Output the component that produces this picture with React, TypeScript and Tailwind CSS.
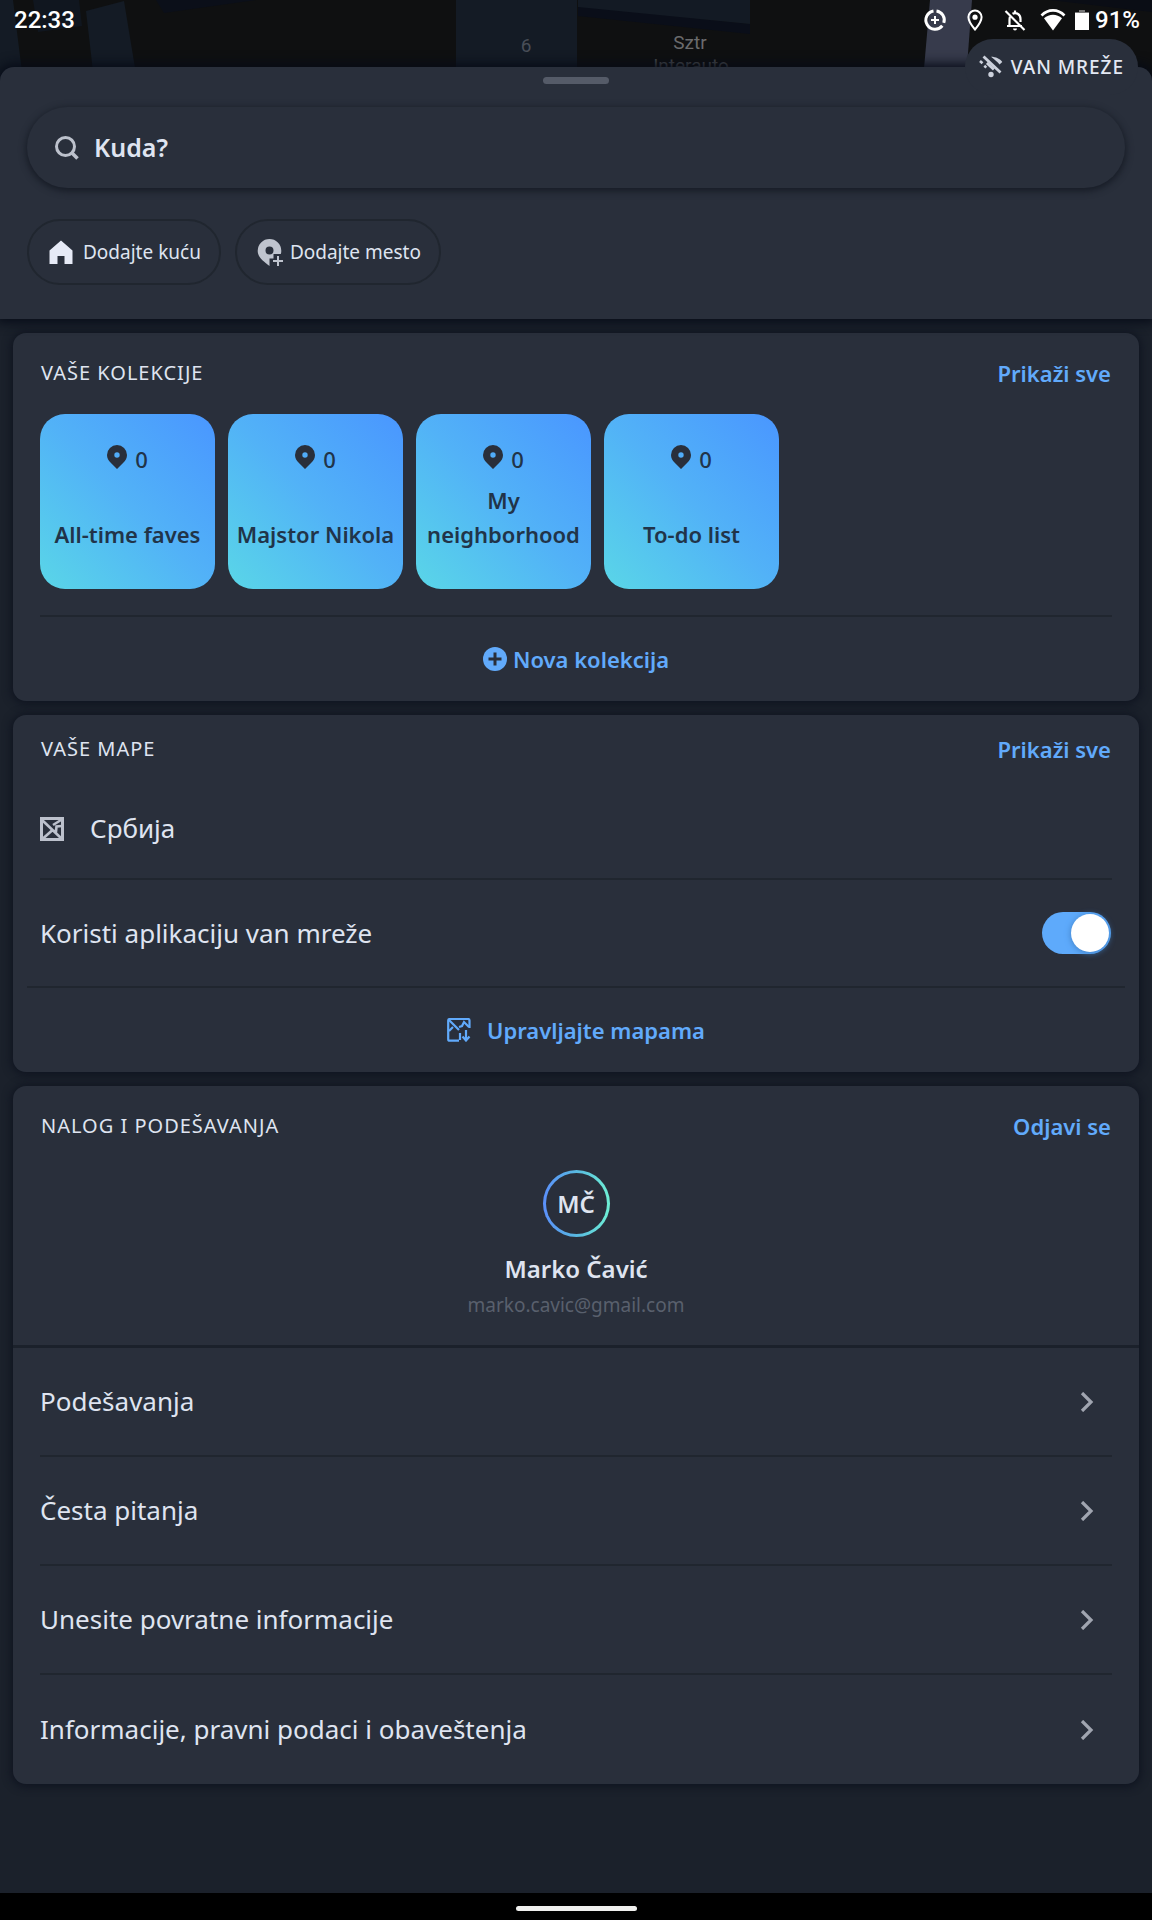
import { useState } from "react";
import type { ReactNode } from "react";
import { clsx } from "clsx";

const COLLECTIONS = [
  { name: "All-time faves", count: 0 },
  { name: "Majstor Nikola", count: 0 },
  { name: "My neighborhood", count: 0 },
  { name: "To-do list", count: 0 },
];

const LINKS = [
  "Podešavanja",
  "Česta pitanja",
  "Unesite povratne informacije",
  "Informacije, pravni podaci i obaveštenja",
];

function MapBackdrop() {
  return (
    <svg
      className="absolute inset-0 h-full w-full"
      viewBox="0 0 1152 80"
      preserveAspectRatio="xMidYMin slice"
      aria-hidden="true"
    >
      <rect width="1152" height="80" fill="#0f1011" />
      <path d="M0 0h13l10 80H0z" fill="#141b25" />
      <path d="M33 0h46l3 26-44 6z" fill="#10161f" />
      <path d="M86 11l38-10 13 79H94z" fill="#141b25" />
      <path d="M156 0h100l-92 13z" fill="#0b0f19" />
      <rect x="456" width="121" height="80" fill="#141b25" />
      <path d="M578 6l172 18v10L578 16z" fill="#0a0e19" />
      <path d="M578 0h172v24L578 7z" fill="#131a24" />
      <path d="M930 0h42l-6 80h-43z" fill="#373b4c" />
      <path d="M1050 0h102v12z" fill="#0a0d15" />
      <g fontFamily="Roboto, sans-serif" textAnchor="middle">
        <text x="526" y="52" fontSize="19" fill="#494e58">
          6
        </text>
        <text x="690" y="49" fontSize="19" fill="#6a6b6d">
          Sztr
        </text>
        <text x="691" y="72" fontSize="19" fill="#4a4c50">
          Interauto
        </text>
      </g>
    </svg>
  );
}

function StatusBar() {
  return (
    <div className="relative flex items-center justify-between pt-1 pr-3 pl-3.5 font-[Roboto,sans-serif] text-2xl leading-8 font-medium text-white">
      <span>22:33</span>
      <div className="flex items-center">
        <svg className="mr-4 size-6" viewBox="0 0 24 24" fill="none" aria-hidden="true">
          <path d="M13.5 2.9a9.2 9.2 0 0 1 7.3 12M19.3 17.7A9.2 9.2 0 1 1 10.5 2.9" stroke="#fff" strokeWidth="3" />
          <path d="M12 8v8M8 12h8" stroke="#fff" strokeWidth="2" />
        </svg>
        <svg className="mr-4 size-6" viewBox="0 0 24 24" aria-hidden="true">
          <path
            d="M12 2.500a6.600 6.600 0 0 0-6.600 6.600c0 4.900 6.600 12.400 6.600 12.400s6.600-7.500 6.600-12.400A6.600 6.600 0 0 0 12 2.500z"
            fill="none"
            stroke="#fff"
            strokeWidth="2"
          />
          <circle cx="12" cy="9.2" r="2.600" fill="#fff" />
        </svg>
        <svg className="mr-3 size-6" viewBox="0 0 24 24" fill="none" stroke="#fff" strokeWidth="2.200" aria-hidden="true">
          <path d="M7 8.600C6.500 10 6.500 11 6.500 12v6h11M9.500 5.800C12.500 4 17.500 5.500 17.500 11v3M4 18h15M12 2.500V5" />
          <path d="M2.500 3l19 19" />
          <path d="M10 20.500h4a2 2 0 0 1-4 0z" fill="#fff" stroke="none" />
        </svg>
        <svg className="mr-2 size-7" viewBox="0 0 28 28" fill="none" aria-hidden="true">
          <path d="M2.500 9.500C9 2.700 19 2.700 25.500 9.500" stroke="#fff" strokeWidth="2.600" />
          <path d="M5 12.300c5-4.800 13-4.800 18 0L14 24.500z" fill="#fff" />
        </svg>
        <svg className="mr-1.5 h-6 w-3.5" viewBox="0 0 14 24" aria-hidden="true">
          <path d="M4 2h6v2h4v3H0V4h4z" fill="#777" />
          <path d="M0 5h14v17H0z" fill="#fff" />
        </svg>
        <span>91%</span>
      </div>
    </div>
  );
}

function OfflineBadge() {
  return (
    <div className="absolute top-[39px] right-3.5 z-10 flex h-14 items-center gap-2 rounded-full bg-[#292f3b] px-3.5 text-[19px] font-medium tracking-wider text-[#e3e8f3]">
      <svg className="size-6" viewBox="0 0 24 24" fill="none" stroke="#ccd1dc" aria-hidden="true">
        <path d="M4.500 1.500l17 16" strokeWidth="2.800" />
        <path d="M12 1.800c5 0 9 2.200 11.300 5.200l-2.800 2.600C18.500 7 15.500 4.500 12 1.800z" fill="#ccd1dc" stroke="none" />
        <path d="M7.800 8l7 6.500" strokeWidth="2.600" />
        <path d="M1 6l2.500 2.300M5.300 10.800l2 1.800" strokeWidth="2.600" />
        <circle cx="12" cy="19.500" r="2.700" fill="#ccd1dc" stroke="none" />
      </svg>
      VAN MREŽE
    </div>
  );
}

function PinIcon({ className }: { className?: string }) {
  return (
    <svg className={className} viewBox="0 0 20 24" aria-hidden="true">
      <path
        fillRule="evenodd"
        fill="currentColor"
        d="M10 0a10 10 0 0 0-10 10c0 3 1.500 5.500 3.500 7.500L10 24l6.500-6.500C18.500 15.500 20 13 20 10A10 10 0 0 0 10 0zm0 7.300a2.700 2.700 0 1 1 0 5.400 2.700 2.700 0 0 1 0-5.400z"
      />
    </svg>
  );
}

type CardProps = {
  title: string;
  action: string;
  dense?: boolean;
  children: ReactNode;
};

function Card({ title, action, dense, children }: CardProps) {
  return (
    <section className="rounded-[13px] bg-[#292f3b] shadow-[0_1px_8px_2px_#0f1420]">
      <div className={clsx("flex items-center justify-between px-7", dense ? "pt-3.5" : "pt-5")}>
        <h2 className="text-xl leading-10 tracking-wider">{title}</h2>
        <button type="button" className="text-[22px] leading-10 font-semibold text-[#61aafb]">
          {action}
        </button>
      </div>
      {children}
    </section>
  );
}

export default function App() {
  const [offline, setOffline] = useState(true);

  return (
    <div className="relative flex min-h-screen flex-col bg-[#1b212b] font-['Noto_Sans',sans-serif] text-[#dfe4f0]">
      <div className="relative h-[67px]">
        <div className="absolute inset-x-0 top-0 h-20 overflow-hidden">
          <MapBackdrop />
        </div>
        <StatusBar />
      </div>
      <OfflineBadge />

      <header className="relative rounded-t-[14px] bg-[#292f3b] px-[27px] pt-2.5 pb-[34px] shadow-[0_0_12px_3px_#060b17]">
        <div className="mx-auto h-[7px] w-[66px] rounded-full bg-[#555b68]" />
        <label className="mt-[23px] flex h-[81px] items-center gap-[15px] rounded-full px-7 shadow-[0_2px_7px_1px_#161b25]">
          <svg className="size-6" viewBox="0 0 24 24" fill="none" stroke="#bcc1cc" strokeWidth="3" aria-hidden="true">
            <circle cx="10.500" cy="10.500" r="9" />
            <path d="M17 17l5.500 5.500" strokeWidth="3.600" />
          </svg>
          <input
            type="text"
            placeholder="Kuda?"
            aria-label="Kuda?"
            className="min-w-0 flex-1 bg-transparent text-[25px] font-semibold outline-none placeholder:text-[#dfe4f0] placeholder:opacity-100"
          />
        </label>
        <div className="mt-[31px] flex gap-3.5">
          <button
            type="button"
            className="flex h-[66px] items-center gap-2.5 rounded-full border-2 border-[#20262f] pr-4.5 pl-5 text-[19px]"
          >
            <svg className="size-6" viewBox="0 0 24 24" fill="#e6eaf6" aria-hidden="true">
              <path d="M12 .500l11.500 10V24h-8v-8h-7v8h-8V10.500z" />
            </svg>
            Dodajte kuću
          </button>
          <button
            type="button"
            className="flex h-[66px] items-center gap-1.5 rounded-full border-2 border-[#20262f] pr-4.5 pl-5 text-[19px]"
          >
            <svg className="size-[27px]" viewBox="0 0 27 27" aria-hidden="true">
              <path
                fill="#bfc4ce"
                fillRule="evenodd"
                d="M12.500 0A11.800 11.800 0 0 0 .700 11.800C.700 18 6 22 12.500 27v-7.500h4V15h7.300c.400-1 .500-2 .500-3.200A11.800 11.800 0 0 0 12.500 0zm0 7.500a4 4 0 1 1 0 8 4 4 0 0 1 0-8z"
              />
              <path d="M21 17v10M16 22h10" stroke="#bfc4ce" strokeWidth="2" />
            </svg>
            Dodajte mesto
          </button>
        </div>
      </header>

      <main className="flex flex-1 flex-col gap-3.5 px-[13px] pt-3.5">
        <Card title="VAŠE KOLEKCIJE" action="Prikaži sve">
          <div className="mt-[21px] flex flex-wrap gap-[13px] px-[27px]">
            {COLLECTIONS.map((item) => (
              <button
                key={item.name}
                type="button"
                className="flex size-[175px] flex-col items-center justify-between rounded-[25px] bg-linear-to-tr from-[#5ad6e7] via-[#52b2f7] to-[#4a96ff] px-2 pt-7 pb-[38px] text-[22px] leading-[34px] font-semibold text-[#213449]"
              >
                <span className="flex items-center gap-2 font-medium">
                  <PinIcon className="mb-1 h-6 w-5 text-[#292f3b]" />
                  {item.count}
                </span>
                <span>{item.name}</span>
              </button>
            ))}
          </div>
          <div className="mx-[27px] mt-[26px] border-t-2 border-[#20262f]">
            <button
              type="button"
              className="flex h-[84px] w-full items-center justify-center gap-1.5 text-[22px] font-semibold text-[#61aafb]"
            >
              <svg className="size-6" viewBox="0 0 24 24" aria-hidden="true">
                <circle cx="12" cy="12" r="12" fill="#61aafb" />
                <path d="M12 5.500v13M5.500 12h13" stroke="#292f3b" strokeWidth="3" />
              </svg>
              Nova kolekcija
            </button>
          </div>
        </Card>

        <Card title="VAŠE MAPE" action="Prikaži sve" dense>
          <div className="mx-[27px] flex h-[111px] items-center gap-[26px] border-b-2 border-[#20262f] pt-2.5 text-[26px]">
            <svg className="size-6" viewBox="0 0 24 24" fill="none" stroke="#bcc1cc" strokeWidth="2.600" aria-hidden="true">
              <path d="M1.500 1.500h21v21h-21z" strokeWidth="3" />
              <path d="M2 3l20 19M3 21.500l9-8 4 1 .500-5 5.500-.500M13 8l8-5" />
            </svg>
            Србија
          </div>
          <label className="mx-3.5 flex h-[108px] items-center justify-between border-b-2 border-[#20262f] pr-3.5 pl-[13px] text-[26px]">
            Koristi aplikaciju van mreže
            <span className="relative flex h-[42px] w-[69px] rounded-full bg-[#5eaafb]">
              <input
                type="checkbox"
                checked={offline}
                onChange={(e) => setOffline(e.target.checked)}
                className="peer absolute inset-0 size-full appearance-none"
              />
              <span className="pointer-events-none m-0.5 size-[38px] rounded-full bg-white shadow-[0_1px_6px_#3f7fc4] peer-checked:ml-auto" />
            </span>
          </label>
          <button
            type="button"
            className="flex h-[84px] w-full items-center justify-center gap-4 text-[22px] font-semibold text-[#61aafb]"
          >
            <svg className="size-6" viewBox="0 0 24 24" fill="none" stroke="#61aafb" strokeWidth="2.200" aria-hidden="true">
              <path d="M22.500 10V2.500a1.500 1.500 0 0 0-1.500-1.500H2.500A1.500 1.500 0 0 0 1.200 2.500v18.700a1.500 1.500 0 0 0 1.500 1.500H12" />
              <path d="M2 2l10 10M2 13l4-4M12 9l3-1 2-4 5 5M13 22V15" />
              <path d="M19 12v10M15.500 18.500l3.500 4 3.500-4" />
            </svg>
            Upravljajte mapama
          </button>
        </Card>

        <Card title="NALOG I PODEŠAVANJA" action="Odjavi se">
          <div className="flex flex-col items-center border-b-[3px] border-[#1b212b] py-6">
            <div className="size-[67px] rounded-full bg-linear-to-r from-[#5b8ffb] via-[#58b8e0] to-[#6ff0d4] p-[3px]">
              <div className="flex size-full items-center justify-center rounded-full bg-[#292f3b] text-2xl font-semibold">
                MČ
              </div>
            </div>
            <p className="mt-3 text-2xl leading-10 font-semibold">Marko Čavić</p>
            <p className="text-[19px] leading-8 text-[#59606d]">marko.cavic@gmail.com</p>
          </div>
          <nav className="px-[27px]">
            {LINKS.map((label) => (
              <a
                key={label}
                href="#"
                className="flex h-[109px] items-center justify-between border-b-2 border-[#20262f] pr-4.5 text-[26px] last:border-b-0"
              >
                {label}
                <svg className="h-5 w-3.5" viewBox="0 0 14 20" fill="none" stroke="#a0a5b0" strokeWidth="3.200" aria-hidden="true">
                  <path d="M2 1l9 9-9 9" />
                </svg>
              </a>
            ))}
          </nav>
        </Card>
      </main>

      <footer className="flex h-[27px] items-center justify-center bg-black pt-1">
        <div className="h-[5px] w-[121px] rounded-full bg-[#f0f0ee]" />
      </footer>
    </div>
  );
}
